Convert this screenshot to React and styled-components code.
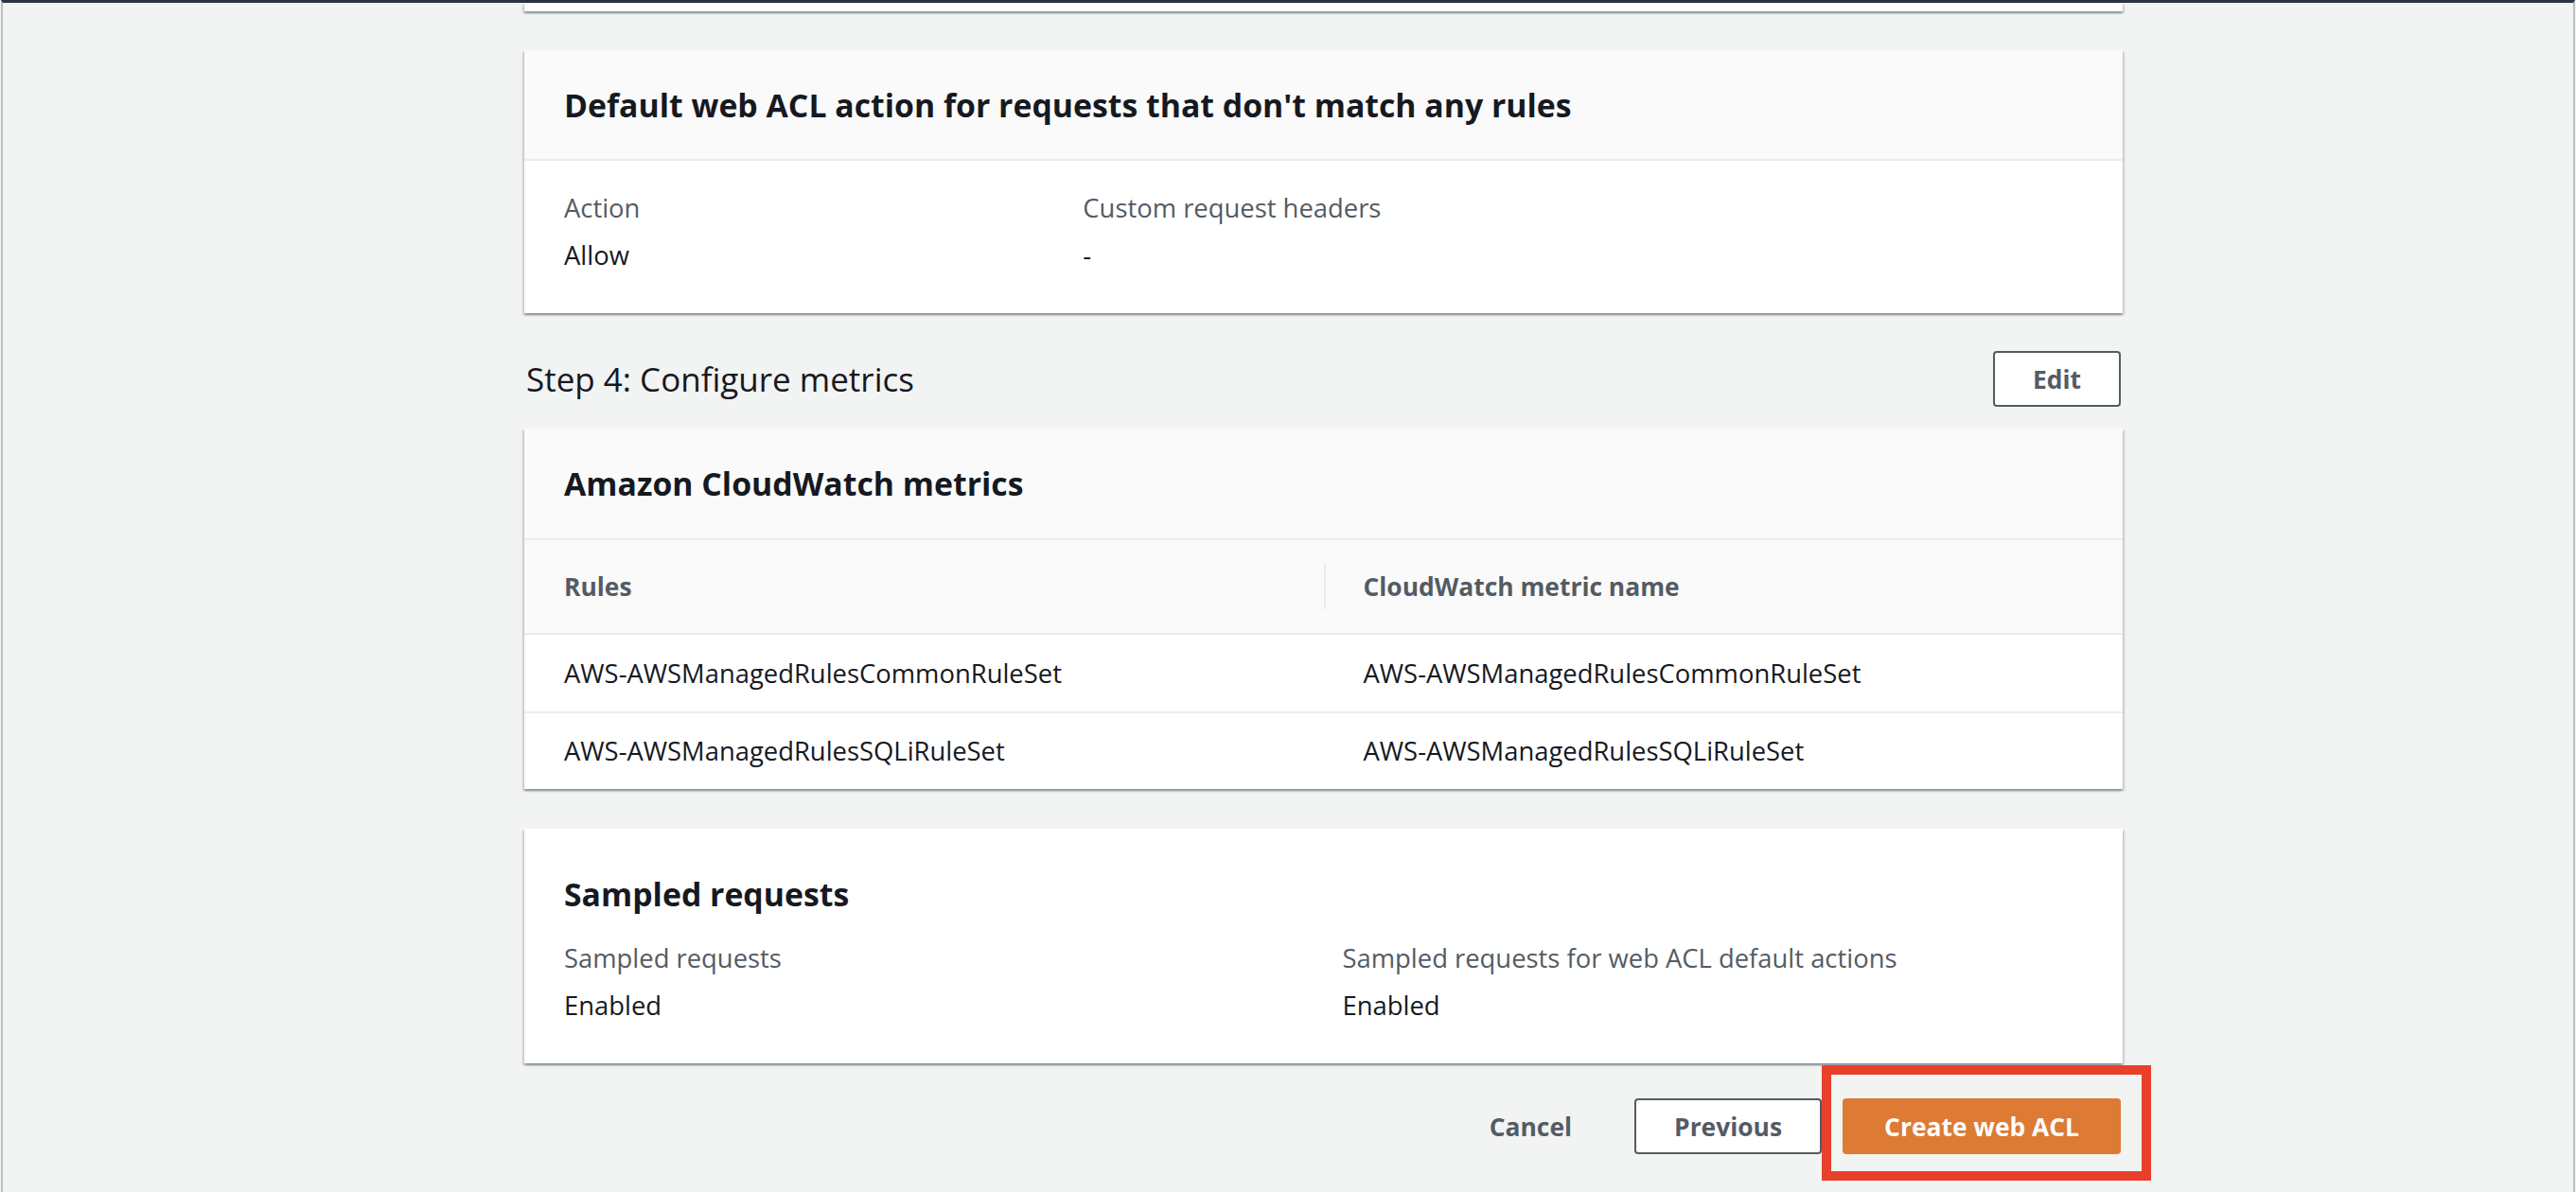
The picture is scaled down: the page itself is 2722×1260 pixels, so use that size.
import React from 'react'
import styled, { createGlobalStyle } from 'styled-components'

const GlobalStyle = createGlobalStyle`
  html, body {
    margin: 0;
    padding: 0;
    background: #f2f3f3;
  }
  body {
    font-family: "Open Sans", "Noto Sans", sans-serif;
    color: #16191f;
  }
`

const Page = styled.div`
  min-height: 1260px;
  box-sizing: border-box;
  border-top: 3px solid #2b3542;
  border-left: 2px solid #b8c0c2;
  border-right: 2px solid #b8c0c2;
  margin: 0 1px;
  background: #f2f3f3;
`

const Column = styled.main`
  margin-left: 551px;
  width: 1689px;
  display: flex;
  flex-direction: column;
`

const Card = styled.section`
  background: #fff;
  box-shadow: 0 2px 2px rgba(0, 28, 36, 0.3), 2px 2px 2px rgba(0, 28, 36, 0.12),
    -2px 2px 2px rgba(0, 28, 36, 0.12);
  margin-top: ${(p) => p.$gap || 0}px;
`

const Stub = styled(Card)`
  height: 9px;
`

const CardHeader = styled.header`
  background: #fafafa;
  border-bottom: 2px solid #eaeded;
  height: ${(p) => p.$h}px;
  display: flex;
  align-items: center;
  padding: 0 42px;
`

const CardTitle = styled.h2`
  margin: 0;
  font-size: 33.8px;
  font-weight: 700;
  line-height: 50px;
  color: #16191f;
`

const CardBody = styled.div`
  padding: ${(p) => p.$pad};
`

const Columns = styled.div`
  display: grid;
  grid-template-columns: repeat(${(p) => p.$n}, 1fr);
  column-gap: 40px;
  margin-top: ${(p) => p.$top || 0}px;
`

const Label = styled.div`
  font-size: 27.4px;
  line-height: 44px;
  color: #545b64;
  margin-bottom: 6px;
`

const Value = styled.div`
  font-size: 27.4px;
  line-height: 44px;
  color: #16191f;
`

const StepRow = styled.div`
  display: flex;
  align-items: center;
  justify-content: space-between;
  margin-top: 40px;
  padding-left: 2px;
  padding-right: 2px;
`

const StepTitle = styled.h1`
  margin: 0;
  font-size: 35px;
  font-weight: 400;
  line-height: 59px;
  color: #16191f;
`

const Button = styled.button`
  box-sizing: border-box;
  height: 59px;
  padding: 0 ${(p) => p.$px || 40}px;
  font-family: "Open Sans", "Noto Sans", sans-serif;
  font-size: 26.4px;
  font-weight: 700;
  border-radius: 4px;
  cursor: pointer;
  border: 2px solid ${(p) => (p.$variant === 'primary' ? '#dd7a34' : p.$variant === 'link' ? 'transparent' : '#545b64')};
  background: ${(p) => (p.$variant === 'primary' ? '#dd7a34' : p.$variant === 'link' ? 'transparent' : '#fff')};
  color: ${(p) => (p.$variant === 'primary' ? '#fff' : '#545b64')};
`

const Table = styled.div`
  display: flex;
  flex-direction: column;
`

const Row = styled.div`
  display: grid;
  grid-template-columns: 1fr 1fr;
  height: ${(p) => p.$h}px;
  align-items: center;
  background: ${(p) => (p.$head ? '#fafafa' : '#fff')};
  border-bottom: ${(p) => (p.$last ? 'none' : '2px solid #eaeded')};
`

const Cell = styled.div`
  position: relative;
  padding-left: 42px;
  font-size: ${(p) => (p.$head ? 26.4 : 27.4)}px;
  line-height: 44px;
  font-weight: ${(p) => (p.$head ? 700 : 400)};
  color: ${(p) => (p.$head ? '#545b64' : '#16191f')};
`

const Divider = styled.span`
  position: absolute;
  left: 0;
  top: -2px;
  width: 2px;
  height: 48px;
  background: #eaeded;
`

const Actions = styled.div`
  display: flex;
  justify-content: flex-end;
  align-items: center;
  gap: 22px;
  margin-top: 37px;
  padding-right: 2px;
`

const Highlight = styled.span`
  position: relative;
  display: inline-flex;
`

const HighlightBox = styled.span`
  position: absolute;
  left: -22px;
  right: -32px;
  top: -35px;
  bottom: -28px;
  border: 10px solid #e8402a;
  pointer-events: none;
`

const rules = [
  ['AWS-AWSManagedRulesCommonRuleSet', 'AWS-AWSManagedRulesCommonRuleSet'],
  ['AWS-AWSManagedRulesSQLiRuleSet', 'AWS-AWSManagedRulesSQLiRuleSet'],
]

export default function App() {
  return (
    <Page>
      <GlobalStyle />
      <Column>
        <Stub />

        <Card $gap={41}>
          <CardHeader $h={115}>
            <CardTitle>Default web ACL action for requests that don't match any rules</CardTitle>
          </CardHeader>
          <CardBody $pad="28px 42px 39px">
            <Columns $n={3}>
              <div>
                <Label>Action</Label>
                <Value>Allow</Value>
              </div>
              <div>
                <Label>Custom request headers</Label>
                <Value>-</Value>
              </div>
            </Columns>
          </CardBody>
        </Card>

        <StepRow>
          <StepTitle>Step 4: Configure metrics</StepTitle>
          <Button>Edit</Button>
        </StepRow>

        <Card $gap={23}>
          <CardHeader $h={116}>
            <CardTitle>Amazon CloudWatch metrics</CardTitle>
          </CardHeader>
          <Table>
            <Row $head $h={98}>
              <Cell $head>Rules</Cell>
              <Cell $head>
                <Divider />
                CloudWatch metric name
              </Cell>
            </Row>
            {rules.map(([rule, metric], i) => (
              <Row key={rule} $h={i === rules.length - 1 ? 80 : 81} $last={i === rules.length - 1}>
                <Cell>{rule}</Cell>
                <Cell>{metric}</Cell>
              </Row>
            ))}
          </Table>
        </Card>

        <Card $gap={42}>
          <CardBody $pad="44px 42px 39px">
            <CardTitle>Sampled requests</CardTitle>
            <Columns $n={2} $top={21}>
              <div>
                <Label>Sampled requests</Label>
                <Value>Enabled</Value>
              </div>
              <div>
                <Label>Sampled requests for web ACL default actions</Label>
                <Value>Enabled</Value>
              </div>
            </Columns>
          </CardBody>
        </Card>

        <Actions>
          <Button $variant="link" $px={42}>Cancel</Button>
          <Button>Previous</Button>
          <Highlight>
            <Button $variant="primary" $px={42}>Create web ACL</Button>
            <HighlightBox />
          </Highlight>
        </Actions>
      </Column>
    </Page>
  )
}
